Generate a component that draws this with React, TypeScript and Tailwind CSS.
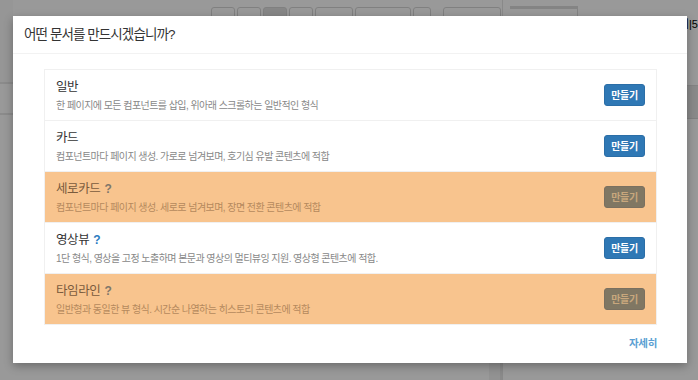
import React from "react";

type DocType = {
  title: string;
  desc: string;
  help?: "gray" | "blue";
  disabled?: boolean;
};

const types: DocType[] = [
  { title: "일반", desc: "한 페이지에 모든 컴포넌트를 삽입, 위아래 스크롤하는 일반적인 형식" },
  { title: "카드", desc: "컴포넌트마다 페이지 생성. 가로로 넘겨보며, 호기심 유발 콘텐츠에 적합" },
  { title: "세로카드", desc: "컴포넌트마다 페이지 생성. 세로로 넘겨보며, 장면 전환 콘텐츠에 적합", help: "gray", disabled: true },
  { title: "영상뷰", desc: "1단 형식, 영상을 고정 노출하며 본문과 영상의 멀티뷰잉 지원. 영상형 콘텐츠에 적합.", help: "blue" },
  { title: "타임라인", desc: "일반형과 동일한 뷰 형식. 시간순 나열하는 히스토리 콘텐츠에 적합", help: "gray", disabled: true },
];

function ToolBtn({ w, active, children }: { w: string; active?: boolean; children?: React.ReactNode }) {
  return (
    <div className={`${w} h-[30px] border border-[#d6d6d6] rounded-[3px] text-[10px] text-[#555] flex justify-center pt-[6px] whitespace-nowrap ${active ? "bg-[#e2e2e2]" : "bg-white"}`}>
      {children}
    </div>
  );
}

function Row({ item }: { item: DocType }) {
  return (
    <div className={`h-[51px] flex items-center justify-between pl-[11px] pr-[11px] border-b border-[#f0f0f0] ${item.disabled ? "bg-[#f8c48e]" : "bg-white"}`}>
      <div className="flex flex-col">
        <div className={`text-[12.5px] leading-[16px] tracking-[-0.4px] flex items-center gap-[4px] ${item.disabled ? "text-[#7a5b3d]" : "text-[#333]"}`}>
          {item.title}
          {item.help && (
            <span className={`font-bold text-[12px] ${item.help === "blue" ? "text-[#2b7bc0]" : "text-[#7f776a]"}`}>?</span>
          )}
        </div>
        <div className={`mt-[5px] text-[10px] leading-[12px] tracking-[-0.55px] ${item.disabled ? "text-[#b5895d]" : "text-[#888]"}`}>
          {item.desc}
        </div>
      </div>
      <button
        className={`w-[41px] h-[22px] rounded-[3px] text-[10px] font-bold tracking-[-0.3px] border ${item.disabled ? "bg-[#807763] border-[#7a7060] text-[#c8a77d]" : "bg-[#2f78b5] border-[#2b6ea7] text-white"}`}
      >
        만들기
      </button>
    </div>
  );
}

export default function App() {
  return (
    <div className="relative w-[698px] h-[380px] overflow-hidden bg-white" style={{ fontFamily: '"Liberation Sans", "Noto Sans CJK KR", sans-serif' }}>
      {/* page behind the dialog */}
      <div className="flex h-full">
        <div className="w-[13px] flex flex-col">
          <div className="h-[82px] bg-[#fafafa]" />
          <div className="h-[33px] border-y-[2px] border-[#e8e8e8]" />
          <div className="flex-1 bg-white" />
        </div>
        <div className="flex-1 flex flex-col">
          <div className="flex gap-[2px] pt-[7px] pl-[198px]">
            <ToolBtn w="w-[24px]">↶</ToolBtn>
            <ToolBtn w="w-[24px]">↷</ToolBtn>
            <ToolBtn w="w-[24px]" active>▮</ToolBtn>
            <ToolBtn w="w-[24px]">□</ToolBtn>
            <ToolBtn w="w-[38px]">≡ 접기</ToolBtn>
            <ToolBtn w="w-[56px]">미리보기 M</ToolBtn>
            <ToolBtn w="w-[18px]" />
            <div className="w-[8px]" />
            <ToolBtn w="w-[58px]">⚙ 문서설정</ToolBtn>
          </div>
          <div className="flex-1" />
          <div className="flex h-[20px]">
            <div className="w-[476px]" />
            <div className="w-[13px] bg-[#f3f3f3] border-r-[2px] border-[#e6e6e6]" />
          </div>
        </div>
        <div className="w-[196px] border-l border-[#e4e4e4] flex flex-col">
          <div className="flex pt-[6px] pl-[7px]">
            <div className="w-[78px] h-[30px] border-t-[3px] border-[#1f4f9c] border-r border-[#dcdcdc]" />
            <div className="flex-1 text-[11px] text-black pt-[10px] pl-[101px] whitespace-nowrap">이|5</div>
          </div>
          <div className="h-[50px] border-b border-[#dddddd]" />
          <div className="h-[33px] bg-[#e6e6e6] border-b border-[#d8d8d8]" />
        </div>
      </div>

      {/* dim */}
      <div className="absolute inset-0 bg-black/40" />

      {/* dialog */}
      <div className="absolute inset-0 flex justify-center pt-[16px] pl-[2px]">
        <div className="w-[674px] h-[347px] bg-white shadow-[0_3px_9px_rgba(0,0,0,0.3)] flex flex-col">
          <div className="h-[38px] border-b border-[#f2f2f2] pl-[11px] pt-[10px] text-[13.5px] leading-[18px] tracking-[-0.9px] text-[#333]">
            어떤 문서를 만드시겠습니까?
          </div>
          <div className="pt-[15px] pl-[31px] pr-[30px] flex flex-col">
            <div className="border-t border-x border-[#f0f0f0] flex flex-col">
              {types.map((t) => (
                <Row key={t.title} item={t} />
              ))}
            </div>
            <div className="flex justify-end pt-[11px]">
              <span className="text-[10.5px] font-bold text-[#5b9fd3] tracking-[-0.3px]">자세히</span>
            </div>
          </div>
        </div>
      </div>
    </div>
  );
}
